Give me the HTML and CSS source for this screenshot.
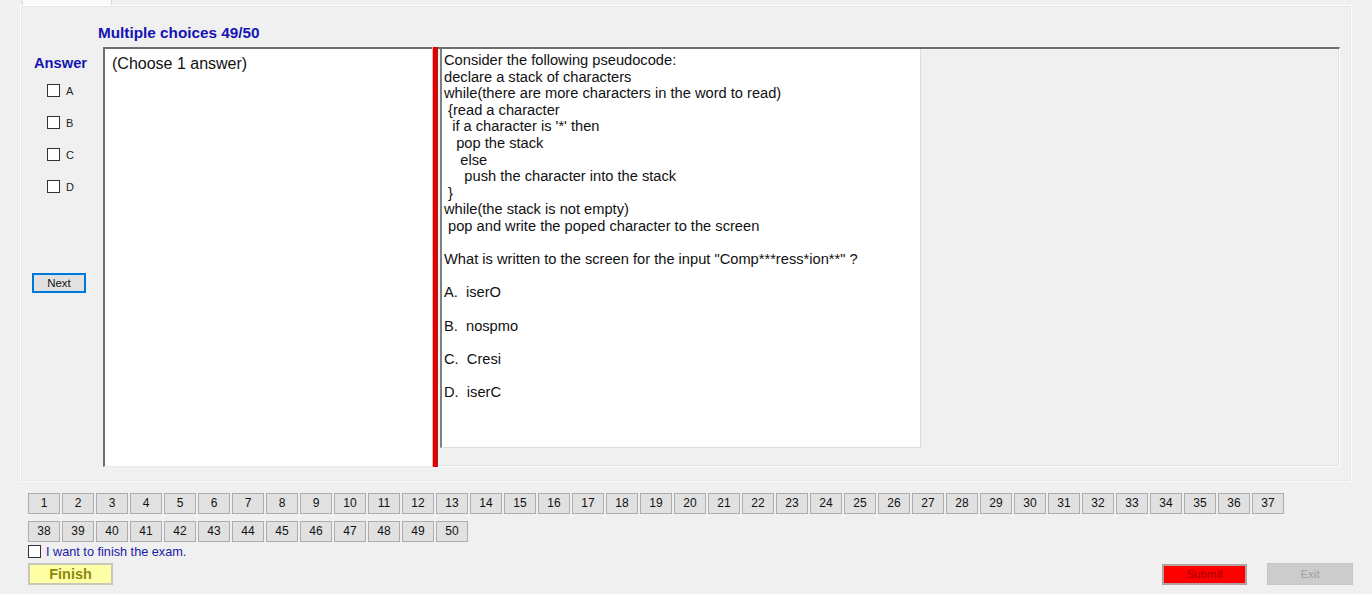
FILE: index.html
```html
<!DOCTYPE html>
<html>
<head>
<meta charset="utf-8">
<link rel="stylesheet" href="styles.css">
</head>
<body>
<div class="tabstrip"><div class="tab"></div></div>
<div class="panel">
  <div class="header">Multiple choices 49/50</div>
  <div class="main">
    <div class="answers">
      <div class="answer-title">Answer</div>
      <div class="opts">
        <div class="opt"><span class="cb"></span><span class="opt-label">A</span></div>
        <div class="opt"><span class="cb"></span><span class="opt-label">B</span></div>
        <div class="opt"><span class="cb"></span><span class="opt-label">C</span></div>
        <div class="opt"><span class="cb"></span><span class="opt-label">D</span></div>
      </div>
      <div class="next">Next</div>
    </div>
    <div class="splitter">
      <div class="left-pane">(Choose 1 answer)</div>
      <div class="redbar"></div>
      <div class="right-pane">
        <div class="question">Consider the following pseudocode:
declare a stack of characters
while(there are more characters in the word to read)
 {read a character
  if a character is '*' then
   pop the stack
    else
     push the character into the stack
 }
while(the stack is not empty)
 pop and write the poped character to the screen

What is written to the screen for the input "Comp***ress*ion**" ?

A.  iserO

B.  nospmo

C.  Cresi

D.  iserC</div>
      </div>
    </div>
  </div>
</div>
<div class="bottom">
  <div class="nums" id="nums"></div>
  <div class="finish-check"><span class="cb"></span><span class="finish-text">I want to finish the exam.</span></div>
  <div class="actions">
    <div class="finish">Finish</div>
    <div class="submit">Submit</div>
    <div class="exit">Exit</div>
  </div>
</div>
<script>
  var n = document.getElementById('nums');
  for (var i = 1; i <= 50; i++) {
    var b = document.createElement('div');
    b.className = 'num';
    b.textContent = i;
    n.appendChild(b);
  }
</script>
</body>
</html>
```
FILE: styles.css
```css
html, body {
  margin: 0;
  padding: 0;
  background: #f0f0f0;
  font-family: "Liberation Sans", Arial, sans-serif;
  width: 1372px;
  height: 594px;
  overflow: hidden;
}
.tabstrip {
  height: 5px;
  position: relative;
}
.tab {
  margin-left: 22px;
  width: 88px;
  height: 5px;
  background: #fbfbfb;
  border-left: 1px solid #dadada;
  border-right: 1px solid #dadada;
}
.panel {
  margin-left: 20px;
  width: 1332px;
  height: 477px;
  box-sizing: border-box;
  border: 1px solid #fdfdfd;
  box-shadow: inset 0 0 0 1px #e6e6e6;
}
.header {
  padding-top: 18px;
  padding-left: 77px;
  height: 17px;
  line-height: 17px;
  font-size: 15.3px;
  font-weight: bold;
  color: #1414b4;
  margin-bottom: 6px;
}
.main {
  display: flex;
}
.answers {
  width: 82px;
  display: flex;
  flex-direction: column;
}
.answer-title {
  margin-top: 8px;
  padding-left: 13px;
  font-size: 14.7px;
  line-height: 17px;
  font-weight: bold;
  color: #1414b4;
}
.opts {
  margin-top: 12px;
  padding-left: 26px;
  display: flex;
  flex-direction: column;
  gap: 19px;
}
.opt {
  display: flex;
  align-items: center;
  height: 13px;
}
.cb {
  display: inline-block;
  width: 11px;
  height: 11px;
  border: 1px solid #333;
  background: #fff;
  flex: none;
}
.opt-label {
  margin-left: 6px;
  font-size: 11px;
  color: #222;
}
.next {
  margin-top: 80px;
  margin-left: 11px;
  width: 50px;
  height: 16px;
  border: 2px solid #0078d7;
  background: #e1e1e1;
  font-size: 11.5px;
  line-height: 16px;
  text-align: center;
  color: #111;
}
.splitter {
  display: flex;
  width: 1237px;
  height: 420px;
}
.left-pane {
  width: 329px;
  box-sizing: border-box;
  background: #fff;
  border-top: 2px solid #6e6e6e;
  border-left: 2px solid #6e6e6e;
  border-bottom: 1px solid #e8e8e8;
  padding: 6px 0 0 7px;
  font-size: 16px;
  line-height: 18px;
  color: #111;
}
.redbar {
  width: 6px;
  box-sizing: border-box;
  background: #e30000;
  border-left: 1px solid #f4b0b0;
  border-right: 1px solid #a02020;
}
.right-pane {
  flex: 1;
  box-sizing: border-box;
  border-top: 2px solid #6e6e6e;
  border-right: 1px solid #fdfdfd;
  border-bottom: 1px solid #fdfdfd;
  box-shadow: inset -1px -1px 0 #e2e2e2;
  padding-left: 2px;
}
.question {
  width: 481px;
  height: 399px;
  box-sizing: border-box;
  background: #fff;
  border-left: 2px solid #808080;
  border-right: 1px solid #dcdcdc;
  border-bottom: 1px solid #dcdcdc;
  padding: 3px 0 0 2px;
  white-space: pre;
  font-size: 14.67px;
  line-height: 16.6px;
  color: #111;
}
.bottom {
  padding-left: 28px;
  padding-top: 11px;
}
.nums {
  display: flex;
  flex-wrap: wrap;
  width: 1258px;
  gap: 7px 2px;
}
.num {
  width: 32px;
  height: 21px;
  box-sizing: border-box;
  border: 1px solid #adadad;
  background: #e1e1e1;
  font-size: 12px;
  line-height: 19px;
  text-align: center;
  color: #111;
}
.finish-check {
  margin-top: 2px;
  display: flex;
  align-items: center;
  height: 15px;
}
.finish-text {
  margin-left: 5px;
  font-size: 12.7px;
  color: #1a1aa6;
}
.actions {
  display: flex;
  align-items: flex-start;
  margin-top: 4px;
  padding-right: 19px;
}
.finish {
  width: 85px;
  height: 22px;
  box-sizing: border-box;
  background: #ffffa6;
  border: 2px solid #c8c8b8;
  font-size: 14.5px;
  font-weight: bold;
  line-height: 18px;
  text-align: center;
  color: #8a8a10;
}
.submit {
  margin-left: auto;
  margin-top: 1px;
  width: 85px;
  height: 21px;
  box-sizing: border-box;
  background: #ff0000;
  border: 2px solid #b4a0a0;
  font-size: 11.5px;
  line-height: 17px;
  text-align: center;
  color: #a00000;
}
.exit {
  margin-left: 20px;
  width: 86px;
  height: 22px;
  box-sizing: border-box;
  background: #cccccc;
  border: 1px solid #c6c6c6;
  font-size: 11.5px;
  line-height: 20px;
  text-align: center;
  color: #a0a0a0;
}
```
